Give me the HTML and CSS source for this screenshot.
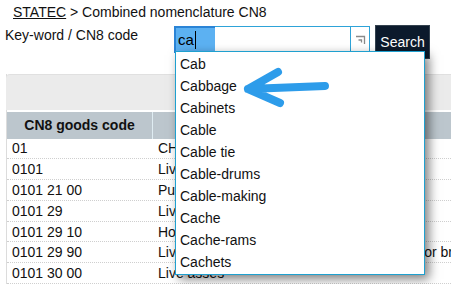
FILE: index.html
```html
<!DOCTYPE html>
<html>
<head>
<meta charset="utf-8">
<link rel="stylesheet" href="styles.css">
</head>
<body>
<div class="page">
  <div class="crumb"><a class="crumb-link">STATEC</a> &gt; Combined nomenclature CN8</div>
  <div class="search-row">
    <label class="kw-label">Key-word / CN8 code</label>
    <div class="combo">
      <div class="field"><span class="sel">ca<span class="caret"></span></span></div>
      <div class="field-icon">
        <svg width="12" height="12" viewBox="0 0 12 12"><path d="M2 2.5H10.5V10" fill="none" stroke="#8a8a8a" stroke-width="1.3"/><path d="M4.5 6H7.5V8.5" fill="none" stroke="#8a8a8a" stroke-width="1.3"/></svg>
      </div>
    </div>
    <button class="search-btn">Search</button>
  </div>

  <div class="grid">
    <div class="toolbar"></div>
    <div class="thead">
      <div class="th c1">CN8 goods code</div>
      <div class="th c2"></div>
    </div>
    <div class="tr"><div class="td c1">01</div><div class="td c2">CHAPTER 1 - LIVE ANIMALS</div></div>
    <div class="tr"><div class="td c1">0101</div><div class="td c2">Live horses, asses, mules and hinnies</div></div>
    <div class="tr"><div class="td c1">0101 21 00</div><div class="td c2">Pure-bred breeding horses</div></div>
    <div class="tr"><div class="td c1">0101 29</div><div class="td c2">Live horses (excl. pure-bred for breeding)</div></div>
    <div class="tr"><div class="td c1">0101 29 10</div><div class="td c2">Horses for slaughter</div></div>
    <div class="tr"><div class="td c1">0101 29 90</div><div class="td c2">Live horses (excl. for slaughter, pure-bred for breeding)</div></div>
    <div class="tr"><div class="td c1">0101 30 00</div><div class="td c2">Live asses</div></div>
  </div>

  <ul class="suggest">
    <li>Cab</li>
    <li>Cabbage</li>
    <li>Cabinets</li>
    <li>Cable</li>
    <li>Cable tie</li>
    <li>Cable-drums</li>
    <li>Cable-making</li>
    <li>Cache</li>
    <li>Cache-rams</li>
    <li>Cachets</li>
  </ul>

  <svg class="arrow" width="92" height="44" viewBox="0 0 92 44">
    <path d="M85 20 L8 23 M38 6 L8 23 L40 37" fill="none" stroke="#2d9cea" stroke-width="8" stroke-linecap="round" stroke-linejoin="round"/>
  </svg>
</div>
</body>
</html>
```

FILE: styles.css
```css
html, body {
  margin: 0;
  padding: 0;
  background: #ffffff;
  overflow: hidden;
}
.page {
  position: relative;
  width: 451px;
  height: 284px;
  overflow: hidden;
  font-family: "Liberation Sans", Arial, sans-serif;
  font-size: 14px;
  line-height: 16px;
  color: #111;
}
.crumb {
  padding: 4px 0 0 13px;
  height: 16px;
}
.crumb-link {
  color: #111;
  text-decoration: underline;
}
.search-row {
  display: flex;
  align-items: flex-start;
  margin-top: 5px;
  height: 34px;
}
.kw-label {
  flex: none;
  width: 174px;
  padding: 2px 0 0 5px;
  box-sizing: border-box;
}
.combo {
  flex: none;
  display: flex;
  margin-top: 1px;
  height: 27px;
}
.field {
  width: 176px;
  height: 27px;
  box-sizing: border-box;
  border: 1px solid #2ea3d8;
  border-right: none;
  display: flex;
}
.sel {
  display: flex;
  align-items: center;
  margin: -1px 0 -1px -1px;
  width: 41px;
  box-sizing: border-box;
  border: 2px solid #2b84d6;
  border-right: none;
  background: #5cb1f2;
  padding-left: 2px;
  color: #000;
  font-size: 15px;
}
.caret {
  display: inline-block;
  width: 1px;
  height: 18px;
  background: #000;
  margin-left: 1px;
}
.field-icon {
  width: 20px;
  height: 27px;
  box-sizing: border-box;
  border: 1px solid #2ea3d8;
  display: flex;
  align-items: center;
  justify-content: center;
}
.search-btn {
  flex: none;
  margin-left: 5px;
  width: 55px;
  height: 34px;
  padding: 0;
  border: 1px solid #34424f;
  background: #0c1a2c;
  color: #fff;
  font-family: "Liberation Sans", Arial, sans-serif;
  font-size: 14px;
  line-height: 16px;
}
.grid {
  margin: 15px 0 0 6px;
  width: 600px;
  border-left: 1px solid #dcdcdc;
}
.toolbar {
  height: 36px;
  margin-left: -1px;
  background: #ebebeb;
  border-top: 1px solid #e0e0e0;
  border-radius: 4px 0 0 0;
  box-sizing: border-box;
}
.thead {
  display: flex;
  margin-top: 2px;
  height: 26.5px;
  background: #bcc6cd;
}
.th {
  font-weight: bold;
  display: flex;
  align-items: center;
  justify-content: center;
  color: #111;
}
.c1 {
  width: 145px;
  flex: none;
  box-sizing: border-box;
}
.th.c1 {
  border-right: 1px solid #dfecf2;
  width: 146px;
}
.c2 {
  flex: 1;
}
.tr {
  display: flex;
  height: 20.8px;
  box-sizing: border-box;
  border-bottom: 1px dotted #cfcfcf;
}
.td {
  display: flex;
  align-items: center;
  white-space: nowrap;
  overflow: hidden;
  color: #111;
}
.td.c1 {
  padding-left: 5px;
  width: 146px;
}
.td.c2 {
  padding-left: 5px;
}
.suggest {
  position: absolute;
  left: 175px;
  top: 51px;
  width: 250px;
  margin: 0;
  padding: 1px 0;
  list-style: none;
  background: #fff;
  border: 1px solid #1fa0cf;
  box-sizing: border-box;
  box-shadow: 4px 4px 10px rgba(0, 0, 0, 0.5);
}
.suggest li {
  height: 22px;
  line-height: 22px;
  padding-left: 4px;
  color: #111;
}
.arrow {
  position: absolute;
  left: 240px;
  top: 66px;
}
```
